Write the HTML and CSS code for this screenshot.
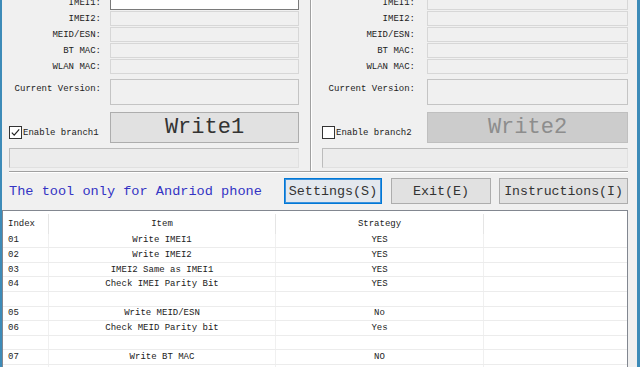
FILE: index.html
```html
<!DOCTYPE html>
<html lang="en">
  <head>
    <meta charset="UTF-8" />
    <title>Write IMEI</title>
    <link rel="stylesheet" href="styles.css">
  </head>
  <body>
    <div class="window">
      <!-- two branches -->
      <div class="branches">
        <div class="branch branch-left">
          <div class="field-row"><span class="label">IMEI1:</span><span class="field field-active"></span></div>
          <div class="field-row"><span class="label">IMEI2:</span><span class="field"></span></div>
          <div class="field-row"><span class="label">MEID/ESN:</span><span class="field"></span></div>
          <div class="field-row"><span class="label">BT MAC:</span><span class="field"></span></div>
          <div class="field-row"><span class="label">WLAN MAC:</span><span class="field"></span></div>
          <div class="field-row version-row"><span class="label">Current Version:</span><span class="field field-version"></span></div>
          <div class="field-row write-row">
            <span class="check">
              <svg class="box" width="13" height="13" viewBox="0 0 13 13"><rect x="0.5" y="0.5" width="12" height="12" fill="#fff" stroke="#333"/><path d="M2.8 6.6 L5.2 9.2 L10.2 3.4" fill="none" stroke="#222" stroke-width="1.2"/></svg>
              Enable branch1
            </span>
            <span class="write-btn">Write1</span>
          </div>
          <div class="progress"></div>
        </div>
        <div class="branch branch-right">
          <div class="field-row"><span class="label">IMEI1:</span><span class="field"></span></div>
          <div class="field-row"><span class="label">IMEI2:</span><span class="field"></span></div>
          <div class="field-row"><span class="label">MEID/ESN:</span><span class="field"></span></div>
          <div class="field-row"><span class="label">BT MAC:</span><span class="field"></span></div>
          <div class="field-row"><span class="label">WLAN MAC:</span><span class="field"></span></div>
          <div class="field-row version-row"><span class="label">Current Version:</span><span class="field field-version"></span></div>
          <div class="field-row write-row">
            <span class="check">
              <svg class="box" width="13" height="13" viewBox="0 0 13 13"><rect x="0.5" y="0.5" width="12" height="12" fill="#fff" stroke="#333"/></svg>
              Enable branch2
            </span>
            <span class="write-btn write-disabled">Write2</span>
          </div>
          <div class="progress"></div>
        </div>
      </div>

      <!-- buttons -->
      <div class="toolbar">
        <span class="notice">The tool only for Andriod phone</span>
        <span class="btn btn-settings">Settings(S)</span>
        <span class="btn btn-exit">Exit(E)</span>
        <span class="btn btn-help">Instructions(I)</span>
      </div>

      <!-- strategy list -->
      <div class="grid">
        <div class="grid-row grid-head"><span class="c-index">Index</span><span>Item</span><span>Strategy</span><span></span></div>
        <div class="grid-row"><span class="c-index">01</span><span>Write IMEI1</span><span>YES</span><span></span></div>
        <div class="grid-row"><span class="c-index">02</span><span>Write IMEI2</span><span>YES</span><span></span></div>
        <div class="grid-row"><span class="c-index">03</span><span>IMEI2 Same as IMEI1</span><span>YES</span><span></span></div>
        <div class="grid-row"><span class="c-index">04</span><span>Check IMEI Parity Bit</span><span>YES</span><span></span></div>
        <div class="grid-row"><span class="c-index"></span><span></span><span></span><span></span></div>
        <div class="grid-row"><span class="c-index">05</span><span>Write MEID/ESN</span><span>No</span><span></span></div>
        <div class="grid-row"><span class="c-index">06</span><span>Check MEID Parity bit</span><span>Yes</span><span></span></div>
        <div class="grid-row"><span class="c-index"></span><span></span><span></span><span></span></div>
        <div class="grid-row"><span class="c-index">07</span><span>Write BT MAC</span><span>NO</span><span></span></div>
        <div class="grid-row"><span class="c-index"></span><span></span><span></span><span></span></div>
      </div>
    </div>
  </body>
</html>
```

FILE: styles.css
```css
* {
  margin: 0;
  padding: 0;
  box-sizing: border-box;
}

html,
body {
  width: 640px;
  height: 367px;
  overflow: hidden;
  background-color: #f0f0f0;
}

.window {
  width: 640px;
  height: 367px;
  overflow: hidden;
  border-left: 2px solid #3d8bb8;
  border-right: 3px solid #3d8bb8;
  font-family: "Liberation Mono", "DejaVu Sans Mono", monospace;
  color: #222;
}

/* branches */
.branches {
  display: flex;
  margin: -5px 9px 0 7px;
  border-bottom: 1px solid #a0a0a0;
  box-shadow: 0 1px 0 #fff;
}

.branch {
  display: flex;
  flex-direction: column;
  padding-bottom: 3px;
}

.branch-left {
  --label: 92px;
  --field: 189px;
  --gap: 9px;
  width: 302px;
  padding-right: 11px;
  border-right: 1px solid #a0a0a0;
}

.branch-right {
  --label: 93px;
  --field: 201px;
  --gap: 12px;
  width: 317px;
  padding-left: 11px;
  box-shadow: inset 1px 0 0 #fff;
}

.field-row {
  display: grid;
  grid-template-columns: var(--label) var(--field);
  column-gap: var(--gap);
  align-items: center;
  height: 15px;
  margin-bottom: 1px;
}

.label {
  font-size: 9px;
  text-align: right;
  white-space: nowrap;
}

.field {
  height: 100%;
  background-color: #f0f0f0;
  border: 1px solid #d7d7d7;
}

.field-active {
  background-color: #fff;
  border-color: #7a7a7a;
}

.version-row {
  height: 26px;
  margin-top: 4px;
  margin-bottom: 0;
  align-items: start;
}

.version-row .label {
  padding-top: 5px;
}

.field-version {
  border-color: #c4c4c4;
}

.write-row {
  height: 31px;
  margin-top: 7px;
  margin-bottom: 0;
  align-items: end;
}

.check {
  display: flex;
  align-items: center;
  gap: 1px;
  margin-bottom: 4px;
  font-size: 9px;
  white-space: nowrap;
}

.write-btn {
  display: flex;
  align-items: center;
  justify-content: center;
  height: 31px;
  background-color: #e1e1e1;
  border: 1px solid #adadad;
  font-size: 22px;
  color: #333;
}

.write-disabled {
  background-color: #cccccc;
  border-color: #bfbfbf;
  color: #8d8d8d;
}

.progress {
  height: 20px;
  margin-top: 5px;
  background-color: #ececec;
  border: 1px solid #bcbcbc;
  border-right-color: #e0e0e0;
  border-bottom-color: #e0e0e0;
}

/* toolbar */
.toolbar {
  display: flex;
  align-items: center;
  gap: 9px;
  margin: 0 9px 0 7px;
  padding-top: 6px;
}

.notice {
  margin-right: auto;
  font-size: 13.6px;
  color: #3434c4;
}

.btn {
  display: flex;
  align-items: center;
  justify-content: center;
  height: 26px;
  background-color: #e1e1e1;
  border: 1px solid #adadad;
  font-size: 13.4px;
  color: #333;
}

.btn-settings {
  width: 98px;
  border-color: #0078d7;
  box-shadow: inset 0 0 0 1px #3c92dc;
  background-color: #e3e8ee;
}

.btn-exit {
  width: 100px;
}

.btn-help {
  width: 129px;
  margin-left: -1px;
  font-size: 13.2px;
}

/* strategy list */
.grid {
  margin: 6px 9px 0 0;
  background-color: #fff;
  border: 1px solid #828790;
  border-bottom: none;
  height: 160px;
}

.grid-row {
  display: grid;
  grid-template-columns: 46px 227px 208px 1fr;
  height: 14.6px;
  border-bottom: 1px solid #ececec;
  font-size: 9px;
}

.grid-row > span {
  display: flex;
  align-items: center;
  justify-content: center;
  border-right: 1px solid #f0f0f0;
  white-space: nowrap;
}

.grid-row > span:last-child {
  border-right: none;
}

.grid-row > .c-index {
  justify-content: flex-start;
  padding-left: 5px;
}

.grid-head {
  height: 22.7px;
  border-bottom: none;
  padding-top: 3px;
}

.grid-head > span {
  border-right-color: #e5e5e5;
}
```
